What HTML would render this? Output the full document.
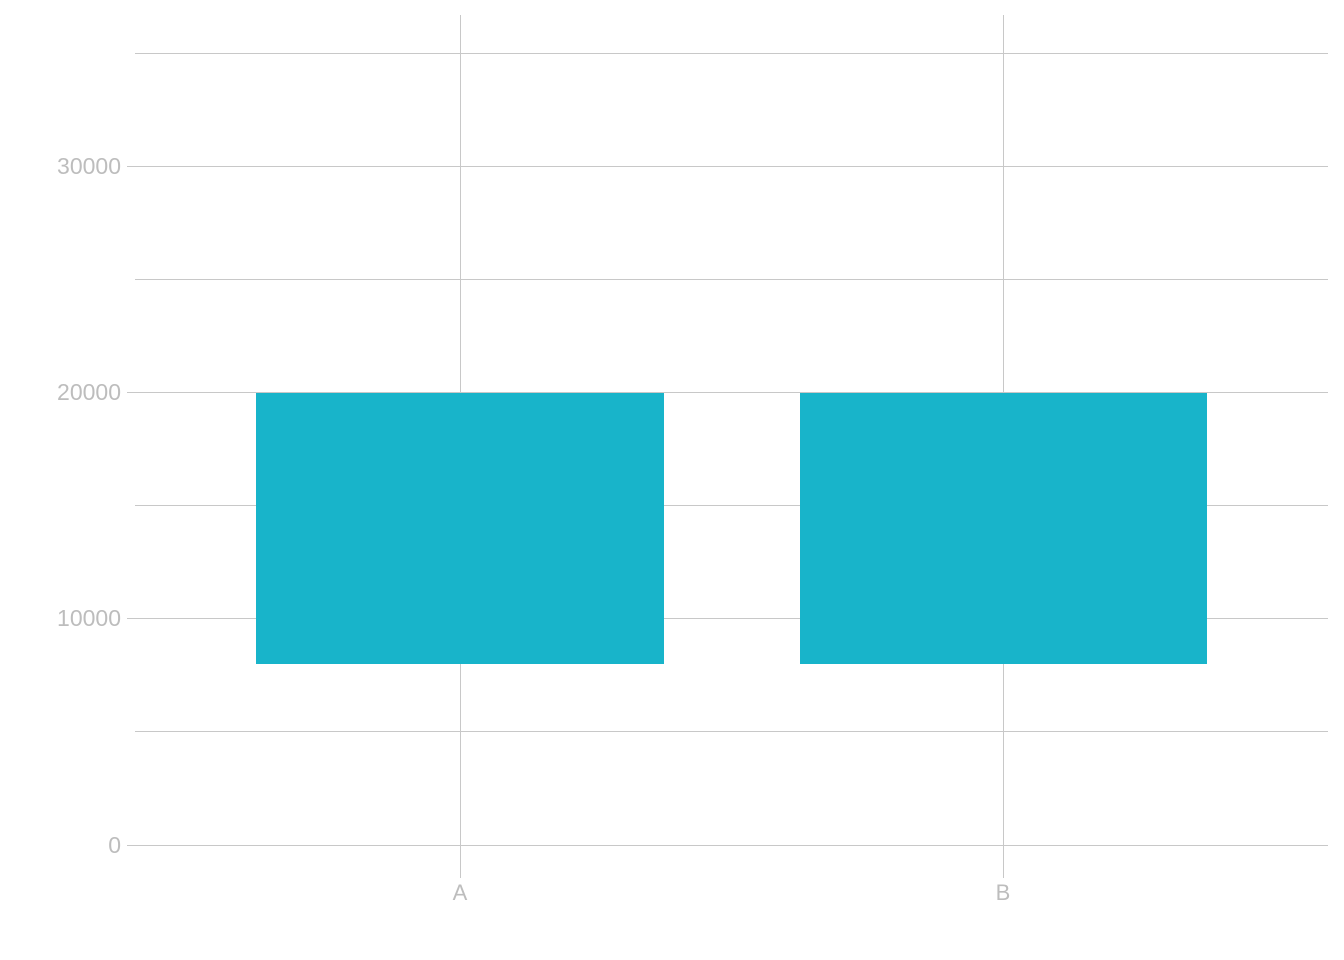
<!DOCTYPE html>
<html><head><style>html,body{margin:0;padding:0;background:#fff}svg{display:block}</style></head><body>
<svg width="1344" height="960" viewBox="0 0 1344 960" xmlns="http://www.w3.org/2000/svg">
<g stroke="#c8c8c8" stroke-width="1">
<line x1="135" y1="53.5" x2="1328" y2="53.5"/>
<line x1="127" y1="166.5" x2="1328" y2="166.5"/>
<line x1="135" y1="279.5" x2="1328" y2="279.5"/>
<line x1="127" y1="392.5" x2="1328" y2="392.5"/>
<line x1="135" y1="505.5" x2="1328" y2="505.5"/>
<line x1="127" y1="618.5" x2="1328" y2="618.5"/>
<line x1="135" y1="731.5" x2="1328" y2="731.5"/>
<line x1="127" y1="845.5" x2="1328" y2="845.5"/>
<line x1="460.5" y1="15" x2="460.5" y2="878"/>
<line x1="1003.5" y1="15" x2="1003.5" y2="878"/>
</g>
<rect x="256" y="393" width="408" height="271" fill="#18b4ca"/>
<rect x="800" y="393" width="407" height="271" fill="#18b4ca"/>
<g font-family="Liberation Sans, sans-serif" font-size="23" fill="#bdbdbd" text-anchor="end">
<text x="121" y="174">30000</text>
<text x="121" y="400">20000</text>
<text x="121" y="626">10000</text>
<text x="121" y="853">0</text>
</g>
<g font-family="Liberation Sans, sans-serif" font-size="22" fill="#bdbdbd" text-anchor="middle">
<text x="460" y="900">A</text>
<text x="1003" y="900">B</text>
</g>
</svg>
</body></html>
